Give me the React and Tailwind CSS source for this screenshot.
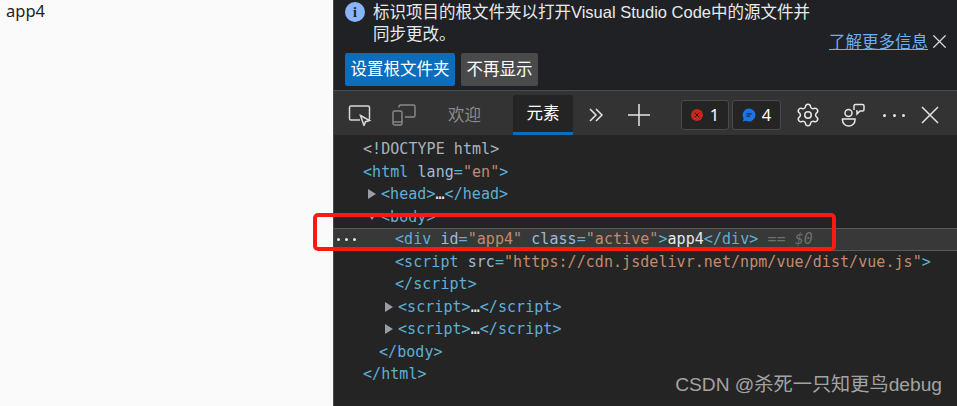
import React from "react";
import { X, Settings } from "lucide-react";

const sans = "font-['Noto_Sans','Noto_Sans_CJK_SC',sans-serif]";

const Tag = ({ children }) => <span className="text-[#5db0d7]">{children}</span>;
const Val = ({ children }) => <span className="text-[#c58a6c]">{children}</span>;
const Attr = ({ children }) => <span className="text-[#9bbbdc]">{children}</span>;

const Row = ({ pad, arrow, children }) => (
  <div className="h-[22.5px] flex items-center whitespace-pre" style={{ paddingLeft: pad }}>
    {arrow === "right" && (
      <svg width="10" height="12" viewBox="0 0 10 12" className="mr-[4px] shrink-0">
        <path d="M1 1 L9 6 L1 11 Z" fill="#9a9da2" />
      </svg>
    )}
    {arrow === "down" && (
      <svg width="10" height="10" viewBox="0 0 10 10" className="mr-[4px] shrink-0">
        <path d="M1 2 L9 2 L5 8 Z" fill="#9a9da2" />
      </svg>
    )}
    <span>{children}</span>
  </div>
);

const InspectIcon = () => (
  <svg width="24" height="22" viewBox="0 0 24 22" fill="none" stroke="#d8d8d8" strokeWidth="1.5">
    <path d="M12 16H3a1.500 1.500 0 0 1-1.500-1.500v-11A1.500 1.500 0 0 1 3 2h17a1.500 1.500 0 0 1 1.500 1.500v11a1.500 1.500 0 0 1-1 1.400" />
    <path d="M12.500 11.500l9 5-4 1.200-1.500 3.800z" fill="#333" />
  </svg>
);

const DeviceIcon = () => (
  <svg width="24" height="22" viewBox="0 0 24 22" fill="none" stroke="#8a8a8a" strokeWidth="1.4">
    <rect x="1" y="7" width="9" height="14" rx="1.500" />
    <path d="M1 18h9" />
    <path d="M7 3.500V2.500A1.500 1.500 0 0 1 8.500 1h13A1.500 1.500 0 0 1 23 2.500v9a1.500 1.500 0 0 1-1.500 1.500H13" />
  </svg>
);

const FeedbackIcon = () => (
  <svg width="24" height="24" viewBox="0 0 24 24" fill="none" stroke="#e6e6e6" strokeWidth="1.5">
    <circle cx="7.500" cy="10" r="3.500" />
    <path d="M1.500 16h12.500v1a6.250 6 0 0 1-12.500 0z" />
    <path d="M13 7V3a1.500 1.500 0 0 1 1.500-1.500h7A1.500 1.500 0 0 1 23 3v3.500A1.500 1.500 0 0 1 21.500 8H19l-3 3V8h-1" />
  </svg>
);

const ThinX = () => (
  <svg width="18" height="18" viewBox="0 0 18 18" stroke="#e6e6e6" strokeWidth="1.500">
    <path d="M1 1L17 17M17 1L1 17" />
  </svg>
);

const ThinPlus = () => (
  <svg width="22" height="22" viewBox="0 0 22 22" stroke="#e6e6e6" strokeWidth="1.500">
    <path d="M11 0V22M0 11H22" />
  </svg>
);

const Chevrons = () => (
  <svg width="14" height="14" viewBox="0 0 14 14" fill="none" stroke="#e6e6e6" strokeWidth="1.500">
    <path d="M1 1l6 6-6 6M7 1l6 6-6 6" />
  </svg>
);

const Dots = () => (
  <div className="flex gap-[6.500px]">
    <span className="w-[3px] h-[3px] rounded-full bg-[#e6e6e6]" />
    <span className="w-[3px] h-[3px] rounded-full bg-[#e6e6e6]" />
    <span className="w-[3px] h-[3px] rounded-full bg-[#e6e6e6]" />
  </div>
);

export default function App() {
  return (
    <div className={`h-[406px] w-[957px] flex overflow-hidden bg-[#fafafa] relative ${sans}`}>
      <div className="w-[333px] shrink-0 pl-[6px] pt-[1px] text-[16.500px] leading-[20px] text-[#222]">app4</div>

      <div className="flex-1 flex flex-col bg-[#242424] border-l border-[#4a4a4a]">
        <div className="h-[91px] shrink-0 bg-[#202124] border-b border-[#494c50] relative pl-[11px] pt-[1px]">
          <div className="flex items-start gap-[8px]">
            <div className="mt-[1px] w-[20px] h-[20px] rounded-full bg-[#8ab4f8] flex items-center justify-center text-[14px] font-bold text-[#202124] font-['Liberation_Serif',serif]">
              i
            </div>
            <div className="whitespace-nowrap text-[16.500px] leading-[22px] text-[#e8eaed]">
              标识项目的根文件夹以打开<span className="font-['Liberation_Sans',sans-serif]">Visual Studio Code</span>中的源文件并
              <br />
              同步更改。
            </div>
          </div>
          <div className="flex gap-[6px] mt-[8px]">
            <button className="h-[33px] w-[110px] rounded-[2px] bg-[#0a6ebd] text-white text-[16.500px]">设置根文件夹</button>
            <button className="h-[33px] w-[77px] rounded-[2px] bg-[#4a4a4a] text-white text-[16.500px]">不再显示</button>
          </div>
          <div className="absolute right-[6px] top-[30px] flex items-center">
            <span className="text-[16.500px] leading-[22px] underline text-[#6ab0f3]">了解更多信息</span>
            <X size={23} color="#d8d8d8" strokeWidth={1.3} />
          </div>
        </div>

        <div className="h-[44px] shrink-0 bg-[#333333] flex items-center pl-[14px] pt-[4px]">
          <InspectIcon />
          <div className="ml-[20px]"><DeviceIcon /></div>
          <span className="ml-[32px] text-[16.500px] text-[#8a8a8a]">欢迎</span>
          <div className="ml-[32px] w-[60px] h-[40px] self-end rounded-t-[2px] bg-[#242424] border-b-[3px] border-[#0a6ebd] flex items-center justify-center text-[16.500px] text-white">
            元素
          </div>
          <div className="ml-[16px]"><Chevrons /></div>
          <div className="ml-[25px]"><ThinPlus /></div>
          <div className="ml-[31px] w-[48px] h-[30px] rounded-[3px] bg-[#242424] border border-[#4a4a4a] flex items-center justify-center gap-[7px] text-[16.500px] text-white">
            <span className="w-[12px] h-[12px] rounded-full bg-[#c5281c] flex items-center justify-center">
              <X size={8} color="#3a1210" strokeWidth={3} />
            </span>
            1
          </div>
          <div className="ml-[3px] w-[49px] h-[30px] rounded-[3px] bg-[#242424] border border-[#4a4a4a] flex items-center justify-center gap-[6px] text-[16.500px] text-white">
            <svg width="14" height="14" viewBox="0 0 14 14">
              <path d="M7 .5a6.500 6.500 0 1 1-3 12.300L.8 13.500l.9-3A6.500 6.500 0 0 1 7 .5z" fill="#1a73e8" />
              <path d="M4.500 5.800h5M4.500 8.200h3.500" stroke="#242424" strokeWidth="1.200" />
            </svg>
            4
          </div>
          <Settings size={26} color="#e6e6e6" strokeWidth={1.4} className="ml-[14px]" />
          <div className="ml-[20px]"><FeedbackIcon /></div>
          <div className="ml-[18px]"><Dots /></div>
          <div className="ml-[16px]"><ThinX /></div>
        </div>

        <div className="flex-1 pt-[3px] font-['DejaVu_Sans_Mono',monospace] text-[15px] tracking-[0.05px]">
          <Row pad={29}><span className="text-[#a8b3bd]">{"<!DOCTYPE html>"}</span></Row>
          <Row pad={29}>
            <Tag>{"<html"}</Tag> <Attr>lang</Attr><Tag>=</Tag><Val>"en"</Val><Tag>{">"}</Tag>
          </Row>
          <Row pad={33} arrow="right">
            <Tag>{"<head>"}</Tag><span className="text-[#e8eaed]">…</span><Tag>{"</head>"}</Tag>
          </Row>
          <Row pad={33} arrow="down">
            <Tag>{"<body>"}</Tag>
          </Row>
          <div className="h-[22.500px] flex items-center whitespace-pre bg-[#383838] border-y border-[#5a5a5a] pl-[61px] relative">
            <div className="absolute left-[3px] top-[9px] flex gap-[5px]">
              <span className="w-[3px] h-[3px] rounded-full bg-[#e8eaed]" />
              <span className="w-[3px] h-[3px] rounded-full bg-[#e8eaed]" />
              <span className="w-[3px] h-[3px] rounded-full bg-[#e8eaed]" />
            </div>
            <span>
              <Tag>{"<div"}</Tag> <Attr>id</Attr><Tag>=</Tag><Val>"app4"</Val> <Attr>class</Attr><Tag>=</Tag><Val>"active"</Val>
              <Tag>{">"}</Tag><span className="text-[#e8eaed]">app4</span><Tag>{"</div>"}</Tag>
              <span className="italic text-[#6f6f6f]"> == $0</span>
            </span>
          </div>
          <Row pad={61}>
            <Tag>{"<script"}</Tag> <Attr>src</Attr><Tag>=</Tag><Val>"https://cdn.jsdelivr.net/npm/vue/dist/vue.js"</Val><Tag>{">"}</Tag>
          </Row>
          <Row pad={61}><Tag>{"</script>"}</Tag></Row>
          <Row pad={50} arrow="right">
            <Tag>{"<script>"}</Tag><span className="text-[#e8eaed]">…</span><Tag>{"</script>"}</Tag>
          </Row>
          <Row pad={50} arrow="right">
            <Tag>{"<script>"}</Tag><span className="text-[#e8eaed]">…</span><Tag>{"</script>"}</Tag>
          </Row>
          <Row pad={45}><Tag>{"</body>"}</Tag></Row>
          <Row pad={29}><Tag>{"</html>"}</Tag></Row>
        </div>
      </div>

      <div className="absolute left-[313px] top-[213px] w-[523px] h-[38px] rounded-[5px] border-[4px] border-[#fb1a10]" />
      <div className="absolute right-[15px] top-[374px] font-['Liberation_Sans','Noto_Sans_CJK_SC',sans-serif] text-[19.200px] leading-[22px] text-[#a3a3a3]">
        CSDN @杀死一只知更鸟debug
      </div>
    </div>
  );
}
